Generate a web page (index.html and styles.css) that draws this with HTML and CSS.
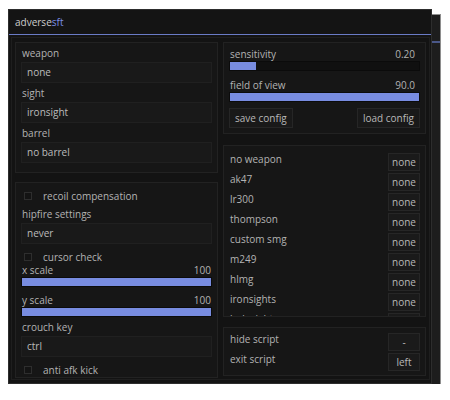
FILE: index.html
```html
<!DOCTYPE html>
<html>
<head>
<meta charset="utf-8">
<link rel="stylesheet" href="styles.css">
</head>
<body>
<div class="stage">
  <div class="window">
    <div class="titlebar">adverse<span class="accent">sft</span></div>
    <div class="frame">
      <div class="col">
        <section class="group g-weapon">
          <div class="label">weapon</div>
          <div class="field">none</div>
          <div class="label">sight</div>
          <div class="field">ironsight</div>
          <div class="label">barrel</div>
          <div class="field">no barrel</div>
        </section>
        <section class="group g-misc">
          <div class="check"><span class="box"></span>recoil compensation</div>
          <div class="label label-after-check">hipfire settings</div>
          <div class="field">never</div>
          <div class="check"><span class="box"></span>cursor check</div>
          <div class="slider">
            <div class="slider-head"><span>x scale</span><span>100</span></div>
            <div class="track"><div class="fill" style="width:100%"></div></div>
          </div>
          <div class="slider">
            <div class="slider-head"><span>y scale</span><span>100</span></div>
            <div class="track"><div class="fill" style="width:100%"></div></div>
          </div>
          <div class="label">crouch key</div>
          <div class="field">ctrl</div>
          <div class="check"><span class="box"></span>anti afk kick</div>
        </section>
      </div>
      <div class="col">
        <section class="group g-view">
          <div class="slider">
            <div class="slider-head"><span>sensitivity</span><span>0.20</span></div>
            <div class="track"><div class="fill" style="width:14%"></div></div>
          </div>
          <div class="slider">
            <div class="slider-head"><span>field of view</span><span>90.0</span></div>
            <div class="track"><div class="fill" style="width:100%"></div></div>
          </div>
          <div class="btn-row">
            <div class="btn">save config</div>
            <div class="btn">load config</div>
          </div>
        </section>
        <section class="group g-binds">
          <div class="bind"><span class="bind-name">no weapon</span><span class="key">none</span></div>
          <div class="bind"><span class="bind-name">ak47</span><span class="key">none</span></div>
          <div class="bind"><span class="bind-name">lr300</span><span class="key">none</span></div>
          <div class="bind"><span class="bind-name">thompson</span><span class="key">none</span></div>
          <div class="bind"><span class="bind-name">custom smg</span><span class="key">none</span></div>
          <div class="bind"><span class="bind-name">m249</span><span class="key">none</span></div>
          <div class="bind"><span class="bind-name">hlmg</span><span class="key">none</span></div>
          <div class="bind"><span class="bind-name">ironsights</span><span class="key">none</span></div>
          <div class="bind"><span class="bind-name">holosight</span><span class="key">none</span></div>
        </section>
        <section class="group g-script">
          <div class="bind"><span class="bind-name">hide script</span><span class="key">-</span></div>
          <div class="bind"><span class="bind-name">exit script</span><span class="key">left</span></div>
        </section>
      </div>
    </div>
  </div>
</div>
</body>
</html>
```
FILE: styles.css
```css
body {
  margin: 0;
  background: #ffffff;
  font-family: "Open Sans", "Noto Sans", sans-serif;
  font-size: 10px;
  color: #b3b3b3;
}

.stage {
  padding: 9px 0 0 8px;
}

.window {
  position: relative;
  width: 424px;
  height: 375px;
  box-sizing: border-box;
  border: 1px solid #2d2d2d;
  background: #131313;
  display: flex;
  flex-direction: column;
}

.window::before {
  content: "";
  position: absolute;
  left: 4px;
  top: 4px;
  right: -10px;
  bottom: -8px;
  z-index: -1;
  border: 1px solid #8e8e8e;
  background: linear-gradient(to bottom, #1d1d1d 26px, #4a5788 26px, #4a5788 28px, #1d1d1d 28px);
}

.titlebar {
  height: 24px;
  line-height: 24px;
  padding-left: 6px;
  border-bottom: 1px solid #6a7bc6;
  background: #141414;
  color: #cdcdcd;
}

.accent {
  color: #7b8fe6;
}

.frame {
  flex: 1;
  margin: 2px 1px 3px 2px;
  border: 1px solid #1e1e1e;
  padding: 4px 3px 1px 3px;
  display: grid;
  grid-template-columns: 203px 203px;
  column-gap: 5px;
  align-items: start;
}

.col {
  display: flex;
  flex-direction: column;
}

.group {
  box-sizing: border-box;
  border: 1px solid #222222;
  background: #161616;
  padding: 0 5px;
}

.g-weapon {
  padding-bottom: 9px;
}

.g-misc {
  margin-top: 9px;
  padding-bottom: 1px;
}

.g-view {
  padding-top: 4px;
  padding-bottom: 5px;
}

.g-binds {
  margin-top: 11px;
  height: 172px;
  padding-top: 5px;
  overflow: hidden;
}

.g-script {
  margin-top: 10px;
  padding-top: 3px;
  padding-bottom: 4px;
}

.label {
  line-height: 17px;
  padding: 2px 0 0 1px;
}

.label-after-check {
  margin-top: 2px;
}

.field {
  box-sizing: border-box;
  height: 21px;
  line-height: 19px;
  border: 1px solid #202020;
  background: #191919;
  padding-left: 5px;
  color: #bcbcbc;
}

.check {
  display: flex;
  align-items: center;
  height: 12px;
  line-height: 12px;
  padding-top: 2px;
  margin-top: 5px;
}

.box {
  width: 8px;
  height: 8px;
  box-sizing: border-box;
  border: 1px solid #2e2e2e;
  background: #141414;
  margin: 0 11px 0 3px;
}

.slider + .slider {
  margin-top: 6px;
}

.g-view .slider + .slider {
  margin-top: 7px;
}

.slider-head {
  display: flex;
  justify-content: space-between;
  line-height: 13px;
  padding: 1px 1px 0 1px;
}

.g-view .slider-head {
  padding-right: 5px;
}

.track {
  height: 10px;
  box-sizing: border-box;
  border: 1px solid #0b0b0b;
  background: #101010;
}

.fill {
  height: 100%;
  background: #788ce0;
}

.btn-row {
  display: flex;
  justify-content: space-between;
  margin-top: 6px;
}

.btn {
  height: 20px;
  box-sizing: border-box;
  border: 1px solid #262626;
  background: #191919;
  line-height: 18px;
  padding: 0 5px;
  color: #b8b8b8;
}

.bind {
  display: flex;
  justify-content: space-between;
  align-items: flex-start;
  height: 20px;
}

.bind-name {
  line-height: 14px;
  padding: 1px 0 0 1px;
}

.key {
  width: 32px;
  height: 18px;
  margin-top: 2px;
  box-sizing: border-box;
  border: 1px solid #262626;
  background: #1a1a1a;
  text-align: center;
  line-height: 16px;
  color: #b8b8b8;
}
```
